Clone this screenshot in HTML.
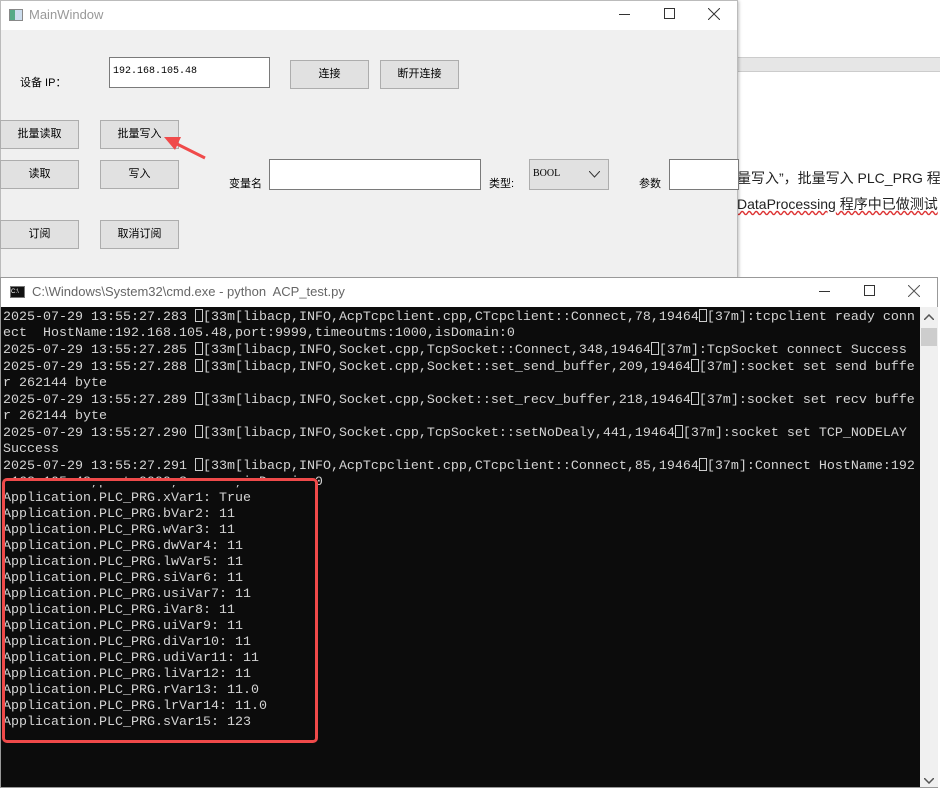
<!DOCTYPE html>
<html><head><meta charset="utf-8"><style>
*{margin:0;padding:0;box-sizing:border-box}
body{width:940px;height:789px;overflow:hidden;background:#fff;position:relative;font-family:"Liberation Sans","Noto Sans CJK SC",sans-serif}
.abs{position:absolute}
.mw{left:0;top:0;width:738px;height:278px;background:#f0f0f0;border:1px solid #bbb;box-shadow:1px 1px 3px rgba(0,0,0,.25)}
.tb{left:0;top:0;width:736px;height:29px;background:#fff}
.btn{position:absolute;width:79px;height:29px;background:#e1e1e1;border:1px solid #adadad;font-size:11px;text-align:center;line-height:27px;color:#000}
.inp{position:absolute;background:#fff;border:1px solid #7a7a7a;height:31px}
.lbl{position:absolute;font-size:11px;color:#000}
.cmd{left:0;top:277px;width:938px;height:511px;background:#fff;border:1px solid #999}
.con{position:absolute;left:0;top:29px;width:919px;height:480px;background:#0c0c0c;overflow:hidden;padding:2px 0 0 2px;font-family:"Liberation Mono","Noto Sans CJK SC",monospace;font-size:13.33px;line-height:16px;color:#d4d4d4;white-space:pre}
.bx{display:inline-block;width:8px;height:13px;border:1px solid #ccc;vertical-align:-2px}
</style></head><body>
<div class="abs" style="left:737px;top:57px;width:203px;height:15px;background:#e6e6e6;border-top:1px solid #ccc;border-bottom:1px solid #ccc"></div>
<div class="abs" style="left:737px;top:168px;font-size:14px;color:#222;white-space:nowrap">量写入”，批量写入 PLC_PRG 程</div>
<div class="abs" style="left:737px;top:194px;font-size:14px;color:#222;white-space:nowrap;text-decoration:underline wavy #d33">DataProcessing<span style="text-decoration:none"> 程序中已做测试</span></div>

<div class="abs mw">
 <div class="abs tb">
  <div class="abs" style="left:8px;top:8px;width:14px;height:12px;border:1px solid #888;background:linear-gradient(90deg,#5a8 0 40%,#cde 40%)"></div>
  <div class="abs" style="left:28px;top:6px;font-size:13px;color:#999">MainWindow</div>
  <div class="abs" style="left:618px;top:13px;width:11px;border-top:1px solid #333"></div>
  <div class="abs" style="left:663px;top:7px;width:11px;height:11px;border:1px solid #333"></div>
  <svg class="abs" style="left:707px;top:7px" width="12" height="12"><path d="M0 0L12 12M12 0L0 12" stroke="#333" stroke-width="1"/></svg>
 </div>
 <div class="lbl" style="left:19px;top:73px">设备 IP：</div>
 <div class="inp" style="left:108px;top:56px;width:161px"><span style="position:absolute;left:3px;top:8px;font-size:10px;font-family:'Liberation Mono',monospace">192.168.105.48</span></div>
 <div class="btn" style="left:289px;top:59px">连接</div>
 <div class="btn" style="left:379px;top:59px">断开连接</div>
 <div class="btn" style="left:-1px;top:119px">批量读取</div>
 <div class="btn" style="left:99px;top:119px">批量写入</div>
 <div class="btn" style="left:-1px;top:159px">读取</div>
 <div class="btn" style="left:99px;top:159px">写入</div>
 <div class="btn" style="left:-1px;top:219px">订阅</div>
 <div class="btn" style="left:99px;top:219px">取消订阅</div>
 <div class="lbl" style="left:228px;top:174px">变量名</div>
 <div class="inp" style="left:268px;top:158px;width:212px"></div>
 <div class="lbl" style="left:488px;top:174px">类型:</div>
 <div class="btn" style="left:528px;top:158px;width:80px;height:31px;text-align:left;padding-left:3px;font-size:10px;font-family:'Liberation Serif',serif">BOOL<svg style="position:absolute;right:8px;top:11px" width="11" height="7"><path d="M0 0L5.5 6L11 0" fill="none" stroke="#333"/></svg></div>
 <div class="lbl" style="left:638px;top:174px">参数</div>
 <div class="inp" style="left:668px;top:158px;width:70px"></div>
 <svg class="abs" style="left:150px;top:125px" width="60" height="40"><line x1="54" y1="32" x2="22" y2="16" stroke="#f04a4a" stroke-width="3"/><polygon points="13,11 30,11 24,24" fill="#f04a4a"/></svg>
</div>

<div class="abs cmd">
 <div class="abs" style="left:9px;top:8px;width:15px;height:12px;background:#111;border:1px solid #777;font-size:6px;color:#fff;line-height:10px">C:\</div>
 <div class="abs" style="left:31px;top:6px;font-size:13px;color:#666">C:\Windows\System32\cmd.exe - python&nbsp; ACP_test.py</div>
 <div class="abs" style="left:818px;top:13px;width:11px;border-top:1px solid #333"></div>
 <div class="abs" style="left:863px;top:7px;width:11px;height:11px;border:1px solid #333"></div>
 <svg class="abs" style="left:907px;top:7px" width="12" height="12"><path d="M0 0L12 12M12 0L0 12" stroke="#555" stroke-width="1"/></svg>
 <div class="con">2025-07-29 13:55:27.283 <span class="bx"></span>[33m[libacp,INFO,AcpTcpclient.cpp,CTcpclient::Connect,78,19464<span class="bx"></span>[37m]:tcpclient ready conn
ect  HostName:192.168.105.48,port:9999,timeoutms:1000,isDomain:0
2025-07-29 13:55:27.285 <span class="bx"></span>[33m[libacp,INFO,Socket.cpp,TcpSocket::Connect,348,19464<span class="bx"></span>[37m]:TcpSocket connect Success
2025-07-29 13:55:27.288 <span class="bx"></span>[33m[libacp,INFO,Socket.cpp,Socket::set_send_buffer,209,19464<span class="bx"></span>[37m]:socket set send buffe
r 262144 byte
2025-07-29 13:55:27.289 <span class="bx"></span>[33m[libacp,INFO,Socket.cpp,Socket::set_recv_buffer,218,19464<span class="bx"></span>[37m]:socket set recv buffe
r 262144 byte
2025-07-29 13:55:27.290 <span class="bx"></span>[33m[libacp,INFO,Socket.cpp,TcpSocket::setNoDealy,441,19464<span class="bx"></span>[37m]:socket set TCP_NODELAY
Success
2025-07-29 13:55:27.291 <span class="bx"></span>[33m[libacp,INFO,AcpTcpclient.cpp,CTcpclient::Connect,85,19464<span class="bx"></span>[37m]:Connect HostName:192
.168.105.48,port:9999,Success,isDomain:0
Application.PLC_PRG.xVar1: True
Application.PLC_PRG.bVar2: 11
Application.PLC_PRG.wVar3: 11
Application.PLC_PRG.dwVar4: 11
Application.PLC_PRG.lwVar5: 11
Application.PLC_PRG.siVar6: 11
Application.PLC_PRG.usiVar7: 11
Application.PLC_PRG.iVar8: 11
Application.PLC_PRG.uiVar9: 11
Application.PLC_PRG.diVar10: 11
Application.PLC_PRG.udiVar11: 11
Application.PLC_PRG.liVar12: 11
Application.PLC_PRG.rVar13: 11.0
Application.PLC_PRG.lrVar14: 11.0
Application.PLC_PRG.sVar15: 123</div>
 <div class="abs" style="left:919px;top:29px;width:18px;height:480px;background:#f0f0f0"></div>
 <div class="abs" style="left:920px;top:50px;width:16px;height:18px;background:#cdcdcd"></div>
 <svg class="abs" style="left:923px;top:36px" width="10" height="6"><path d="M0 6L5 1L10 6" fill="none" stroke="#555" stroke-width="1.5"/></svg>
 <svg class="abs" style="left:923px;top:500px" width="10" height="6"><path d="M0 0L5 5L10 0" fill="none" stroke="#555" stroke-width="1.5"/></svg>
</div>
<div class="abs" style="left:2px;top:479px;width:316px;height:6px;background:#0c0c0c"></div>
<div class="abs" style="left:2px;top:478px;width:316px;height:265px;border:3px solid #ef4a4a;border-radius:5px"></div>
</body></html>
